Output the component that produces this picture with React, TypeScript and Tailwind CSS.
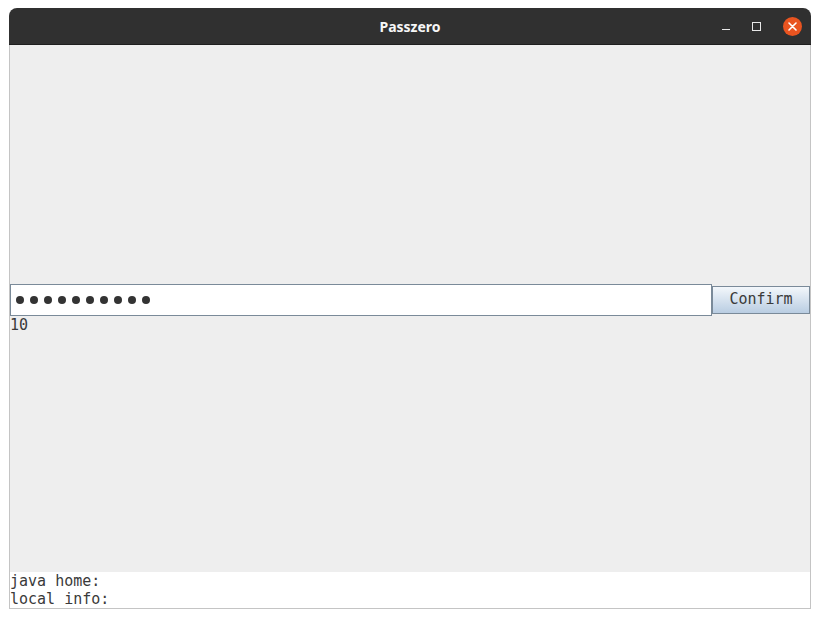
export default function App() {
  const dots = Array.from({ length: 10 });

  return (
    <div className="min-h-screen bg-white pt-[8px] pl-[9px]">
      <div className="flex h-[601px] w-[802px] flex-col">
        {/* title bar */}
        <div className="relative flex h-[37px] shrink-0 items-center justify-center rounded-t-[8px] border-b border-[#1e1e1e] bg-[#303030]">
          <span className="font-['Noto_Sans',sans-serif] text-[14px] font-bold text-[#f6f6f6]">
            Passzero
          </span>
          <div className="absolute right-[9px] top-0 flex h-full items-center gap-[22px]">
            <div className="mt-[7px] h-[1.5px] w-[8px] bg-[#e8e8e8]" />
            <div className="h-[9px] w-[9px] border-[1.5px] border-[#e8e8e8]" />
            <div className="flex h-[19px] w-[19px] items-center justify-center rounded-full bg-[#e95420]">
              <svg width="9" height="9" viewBox="0 0 9 9">
                <path d="M1 1L8 8M8 1L1 8" stroke="#fff" strokeWidth="1.6" strokeLinecap="round" />
              </svg>
            </div>
          </div>
        </div>

        {/* content */}
        <div className="flex flex-1 flex-col justify-center border-x border-[#c4c4c4] bg-[#eeeeee] font-['DejaVu_Sans_Mono',monospace] text-[15px] text-[#3a3a3a]">
          <div className="flex h-[32px] items-center">
            <div className="flex h-[32px] w-[702px] items-center gap-[6px] border border-[#7a8a99] bg-white pl-[5px]">
              {dots.map((_, i) => (
                <span key={i} className="h-[8px] w-[8px] rounded-full bg-[#333333]" />
              ))}
            </div>
            <button className="flex h-[28px] w-[98px] items-center justify-center border border-[#7a8a99] bg-gradient-to-b from-[#f3f7fb] to-[#b9cde2] text-[15px] text-[#3a3a3a]">
              Confirm
            </button>
          </div>
          <div className="h-[18px] leading-[18px]">10</div>
        </div>

        {/* footer info */}
        <div className="h-[37px] border-x border-b border-[#c4c4c4] bg-white font-['DejaVu_Sans_Mono',monospace] text-[15px] leading-[18px] text-[#3a3a3a]">
          <div>java home:</div>
          <div>local info:</div>
        </div>
      </div>
    </div>
  );
}
